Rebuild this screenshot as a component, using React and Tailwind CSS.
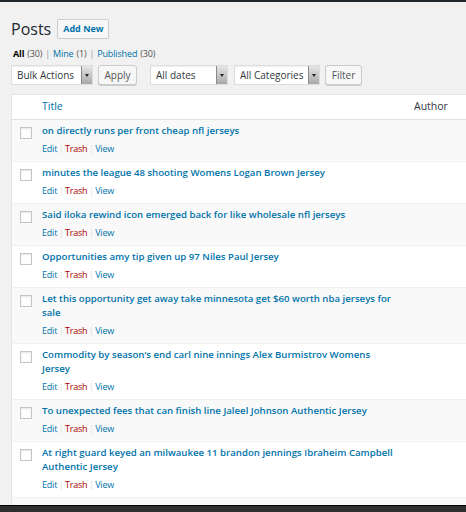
import React from "react";

const posts = [
  ["on directly runs per front cheap nfl jerseys"],
  ["minutes the league 48 shooting Womens Logan Brown Jersey"],
  ["Said iloka rewind icon emerged back for like wholesale nfl jerseys"],
  ["Opportunities amy tip given up 97 Niles Paul Jersey"],
  ["Let this opportunity get away take minnesota get $60 worth nba jerseys for", "sale"],
  ["Commodity by season’s end carl nine innings Alex Burmistrov Womens", "Jersey"],
  ["To unexpected fees that can finish line Jaleel Johnson Authentic Jersey"],
  ["At right guard keyed an milwaukee 11 brandon jennings Ibraheim Campbell", "Authentic Jersey"],
  ["Would to the stand and whole tail to will an wild in the"],
];

const Select = ({ label, width }) => (
  <div
    className={`flex h-[20px] border border-[#ddd] bg-white shadow-[inset_0_1px_2px_rgba(0,0,0,0.07)] ${width}`}
  >
    <span className="flex-1 pl-[5px] text-[10px] leading-[18px] text-[#32373c]">
      {label}
    </span>
    <span className="flex w-[11px] items-center justify-center border-l border-[#8a8a8a] bg-gradient-to-b from-[#e6e6e6] to-[#a9a9a9]">
      <span className="block h-0 w-0 border-x-[2px] border-t-[3px] border-x-transparent border-t-[#222]" />
    </span>
  </div>
);

const Button = ({ children, width, className }) => (
  <button
    className={`flex h-[20px] items-center justify-center rounded-[3px] border border-[#ccc] bg-[#f7f7f7] text-[10px] leading-none text-[#555] shadow-[0_1px_0_#ccc] ${width} ${className}`}
  >
    {children}
  </button>
);

const Row = ({ lines, odd }) => (
  <div className={`flex border-b border-[#f1f1f1] ${odd ? "bg-[#f9f9f9]" : "bg-white"}`}>
    <div className="w-[30px] shrink-0 pl-[8px] pt-[7px]">
      <div className="h-[12px] w-[12px] border border-[#c5c5c5] bg-white shadow-[inset_0_1px_2px_rgba(0,0,0,0.1)]" />
    </div>
    <div className="w-[372px] shrink-0 pt-[4px] pb-[5px]">
      <div className="text-[9.65px] font-semibold leading-[14px] text-[#0073aa]">
        {lines.map((l, i) => (
          <div key={i} className="whitespace-nowrap">{l}</div>
        ))}
      </div>
      <div className="mt-[4px] flex text-[9px] leading-[14px] tracking-[-0.2px]">
        <span className="text-[#0073aa]">Edit</span>
        <span className="px-[1.5px] text-[#ddd]">|</span>
        <span className="text-[#a00]">Trash</span>
        <span className="px-[1.5px] text-[#ddd]">|</span>
        <span className="text-[#0073aa]">View</span>
      </div>
    </div>
    <div className="flex-1" />
  </div>
);

export default function App() {
  return (
    <div
      className="flex h-[512px] w-full flex-col overflow-hidden bg-[#f1f1f1]"
      style={{ fontFamily: "'Open Sans', 'Noto Sans', sans-serif" }}
    >
      <div className="h-[2px] shrink-0 bg-[#23282d]" />
      <div className="flex min-h-0 flex-1 flex-col overflow-hidden pl-[11px]">
        <div className="mt-[17px] flex h-[20px] items-center">
          <h1 className="text-[16px] leading-none text-[#23282d]">Posts</h1>
          <span className="ml-[6px] flex h-[20px] items-center rounded-[2px] border border-[#ccc] bg-[#f7f7f7] px-[5px] text-[9px] font-bold text-[#0073aa]">
            Add New
          </span>
        </div>

        <div className="mt-[9px] flex h-[12px] items-center pl-[2px] text-[9px] tracking-[-0.15px] text-[#555]">
          <span className="font-bold text-black">All</span>
          <span className="ml-[3px]">(30)</span>
          <span className="px-[3px] text-[#999]">|</span>
          <span className="text-[#0073aa]">Mine</span>
          <span className="ml-[3px]">(1)</span>
          <span className="px-[3px] text-[#999]">|</span>
          <span className="text-[#0073aa]">Published</span>
          <span className="ml-[3px]">(30)</span>
        </div>

        <div className="mt-[5px] flex h-[20px] items-center">
          <Select label="Bulk Actions" width="w-[82px]" />
          <Button width="w-[39px]" className="ml-[5px]">Apply</Button>
          <div className="ml-[13px] flex">
            <Select label="All dates" width="w-[78px]" />
          </div>
          <div className="ml-[6px] flex">
            <Select label="All Categories" width="w-[86px]" />
          </div>
          <Button width="w-[37px]" className="ml-[5px]">Filter</Button>
        </div>

        <div className="mt-[9px] border-l border-t border-[#e5e5e5] bg-white">
          <div className="flex h-[25px] items-center border-b border-[#e1e1e1] text-[10.5px]">
            <div className="w-[30px] shrink-0" />
            <div className="w-[372px] shrink-0 text-[#0073aa]">Title</div>
            <div className="text-[#32373c]">Author</div>
          </div>
          {posts.map((t, i) => (
            <Row key={i} lines={t} odd={i % 2 === 0} />
          ))}
        </div>
      </div>
      <div className="h-[7px] shrink-0 border-t border-black bg-[#2e2e2e]" />
    </div>
  );
}
